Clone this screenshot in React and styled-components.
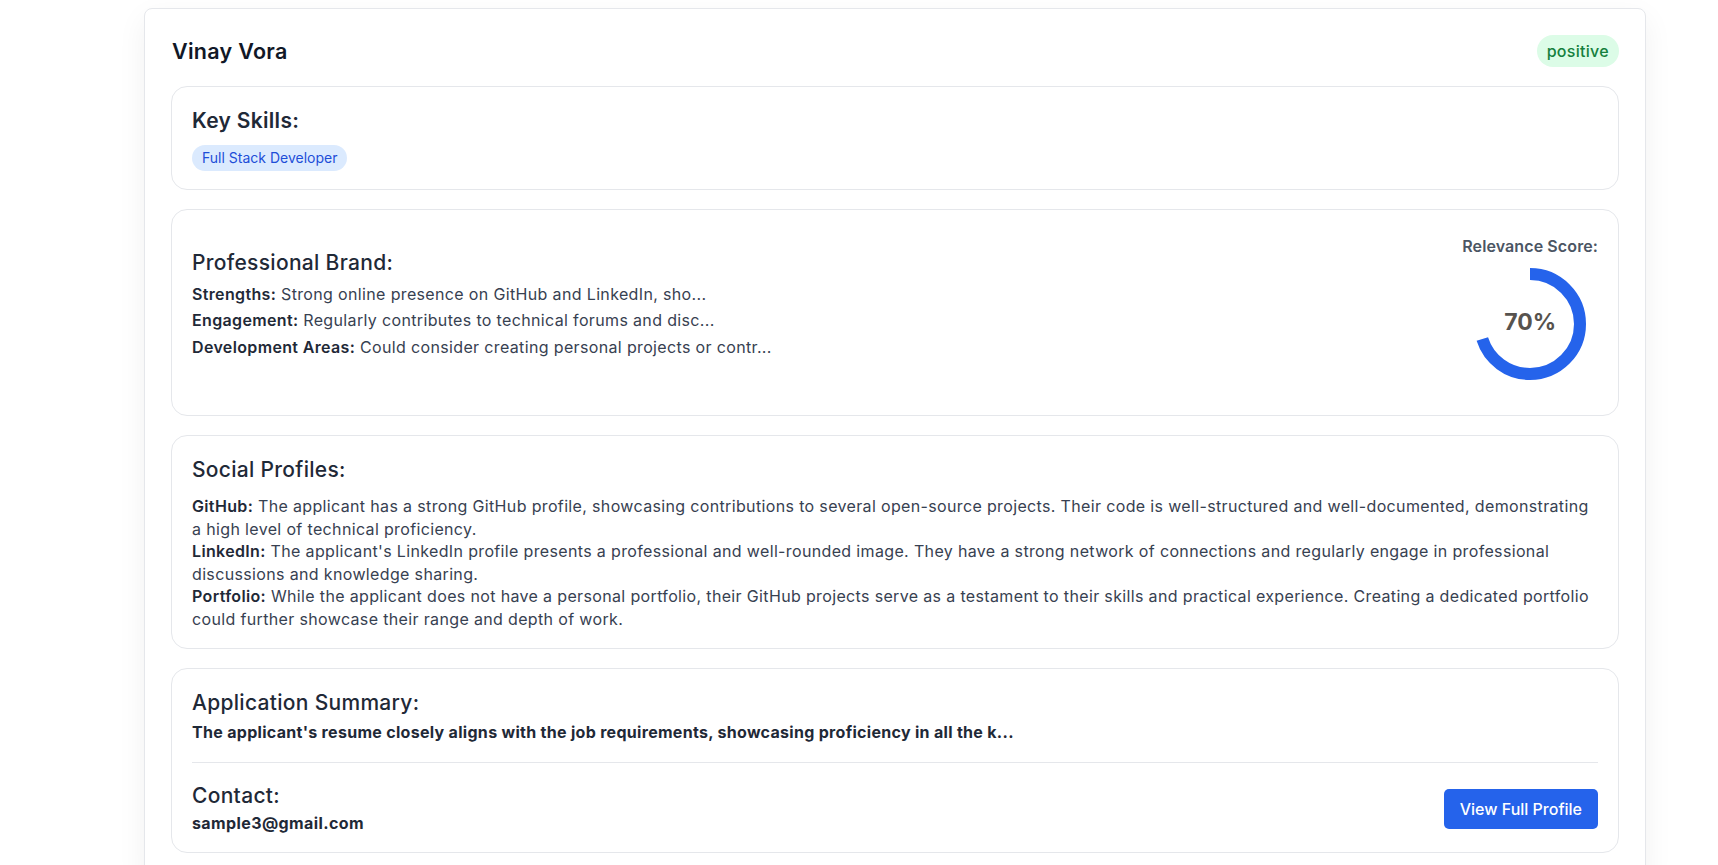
import React from "react";
import styled, { createGlobalStyle } from "styled-components";

const GlobalStyle = createGlobalStyle`
  html, body { margin: 0; padding: 0; background: #ffffff; }
  body {
    font-family: Inter, "Open Sans", "Noto Sans", sans-serif;
    color: #374151;
    -webkit-font-smoothing: antialiased;
  }
  * { box-sizing: border-box; }
`;

const Page = styled.div`
  padding: 8px 0 24px 144px;
`;

const Card = styled.article`
  width: 1502px;
  background: #fff;
  border: 1px solid #e5e7eb;
  border-radius: 8px;
  box-shadow: 0 10px 30px rgba(0, 0, 0, 0.06);
  padding: 26px;
  display: flex;
  flex-direction: column;
  gap: 19px;
`;

const Header = styled.header`
  display: flex;
  align-items: center;
  justify-content: space-between;
  min-height: 32px;
`;

const Name = styled.h2`
  margin: 0 0 0 1px;
  font-size: 21.5px;
  line-height: 28px;
  font-weight: 600;
  letter-spacing: 0.3px;
  color: #111827;
`;

const Sentiment = styled.span`
  display: inline-flex;
  align-items: center;
  height: 32px;
  padding: 0 10px;
  border-radius: 999px;
  background: #dcfce7;
  color: #15803d;
  font-size: 16px;
  font-weight: 500;
  letter-spacing: 0.3px;
`;

const Box = styled.section`
  border: 1px solid #e5e7eb;
  border-radius: 16px;
  padding: 22px 20px 18px;
`;

const Row = styled.div`
  display: flex;
  align-items: center;
  justify-content: space-between;
  gap: 24px;
`;

const Column = styled.div`
  display: flex;
  flex-direction: column;
  padding-bottom: ${(p) => p.$pb || 0}px;
`;

const SectionTitle = styled.h3`
  margin: 0 0 ${(p) => p.$mb ?? 8}px;
  font-size: 21px;
  line-height: 24px;
  font-weight: ${(p) => p.$weight || 500};
  letter-spacing: 0.3px;
  color: #1f2937;
`;

const Tag = styled.span`
  align-self: flex-start;
  display: inline-block;
  padding: 3px 10px;
  border-radius: 999px;
  background: #dbeafe;
  color: #1d4ed8;
  font-size: 14px;
  line-height: 20px;
`;

const Line = styled.p`
  margin: 0 0 ${(p) => p.$mb || 0}px;
  font-size: 16px;
  line-height: 22.5px;
  letter-spacing: 0.35px;
  color: #374151;
  white-space: nowrap;
`;

const Label = styled.strong`
  font-weight: 600;
  color: #1f2937;
`;

const ScoreBlock = styled.div`
  display: flex;
  flex-direction: column;
  align-items: center;
  gap: 6px;
  padding: 2px 0 13px;
`;

const ScoreLabel = styled.span`
  font-size: 16px;
  line-height: 24px;
  font-weight: 600;
  letter-spacing: 0.1px;
  color: #4b5563;
`;

const Gauge = styled.div`
  position: relative;
  width: 120px;
  height: 120px;
`;

const GaugeValue = styled.span`
  position: absolute;
  inset: 0;
  display: flex;
  align-items: center;
  justify-content: center;
  padding-bottom: 4px;
  font-size: 23px;
  font-weight: 700;
  color: #57534e;
`;

const Summary = styled.p`
  margin: 0;
  padding-bottom: 18px;
  border-bottom: 1px solid #e5e7eb;
  font-size: 16px;
  line-height: 22.5px;
  letter-spacing: 0.3px;
  font-weight: 700;
  color: #1f2937;
`;

const ContactRow = styled(Row)`
  padding-top: 21px;
`;

const Email = styled.span`
  font-size: 16px;
  line-height: 22.5px;
  letter-spacing: 0.4px;
  font-weight: 700;
  color: #1f2937;
`;

const Button = styled.button`
  height: 40px;
  padding: 0 16px;
  border: none;
  border-radius: 5px;
  background: #2563eb;
  color: #fff;
  font-family: inherit;
  font-size: 16px;
  font-weight: 500;
  cursor: pointer;
`;

function ScoreRing({ value }) {
  const r = 50;
  const c = 2 * Math.PI * r;
  return (
    <Gauge>
      <svg width="120" height="120" viewBox="0 0 120 120">
        <circle
          cx="60"
          cy="60"
          r={r}
          fill="none"
          stroke="#2563eb"
          strokeWidth="12"
          strokeDasharray={c}
          strokeDashoffset={c * (1 - value / 100)}
          transform="rotate(-90 60 60)"
        />
      </svg>
      <GaugeValue>{value}%</GaugeValue>
    </Gauge>
  );
}

export default function App() {
  return (
    <>
      <GlobalStyle />
      <Page>
        <Card>
          <Header>
            <Name>Vinay Vora</Name>
            <Sentiment>positive</Sentiment>
          </Header>

          <Box>
            <Column>
              <SectionTitle $weight={600} $mb={12}>Key Skills:</SectionTitle>
              <Tag>Full Stack Developer</Tag>
            </Column>
          </Box>

          <Box>
            <Row>
              <Column $pb={16}>
                <SectionTitle $mb={8}>Professional Brand:</SectionTitle>
                <Line $mb={4}>
                  <Label>Strengths:</Label> Strong online presence on GitHub and LinkedIn, sho...
                </Line>
                <Line $mb={4}>
                  <Label>Engagement:</Label> Regularly contributes to technical forums and disc...
                </Line>
                <Line $mb={4}>
                  <Label>Development Areas:</Label> Could consider creating personal projects or contr...
                </Line>
              </Column>
              <ScoreBlock>
                <ScoreLabel>Relevance Score:</ScoreLabel>
                <ScoreRing value={70} />
              </ScoreBlock>
            </Row>
          </Box>

          <Box>
            <SectionTitle $mb={13}>Social Profiles:</SectionTitle>
            <Line>
              <Label>GitHub:</Label> The applicant has a strong GitHub profile, showcasing contributions to several open-source projects. Their code is well-structured and well-documented, demonstrating
              <br />a high level of technical proficiency.
            </Line>
            <Line>
              <Label>LinkedIn:</Label> The applicant's LinkedIn profile presents a professional and well-rounded image. They have a strong network of connections and regularly engage in professional
              <br />discussions and knowledge sharing.
            </Line>
            <Line>
              <Label>Portfolio:</Label> While the applicant does not have a personal portfolio, their GitHub projects serve as a testament to their skills and practical experience. Creating a dedicated portfolio
              <br />could further showcase their range and depth of work.
            </Line>
          </Box>

          <Box>
            <SectionTitle $mb={6}>Application Summary:</SectionTitle>
            <Summary>
              The applicant's resume closely aligns with the job requirements, showcasing proficiency in all the k...
            </Summary>
            <ContactRow>
              <Column>
                <SectionTitle $mb={4}>Contact:</SectionTitle>
                <Email>sample3@gmail.com</Email>
              </Column>
              <Button>View Full Profile</Button>
            </ContactRow>
          </Box>
        </Card>
      </Page>
    </>
  );
}
